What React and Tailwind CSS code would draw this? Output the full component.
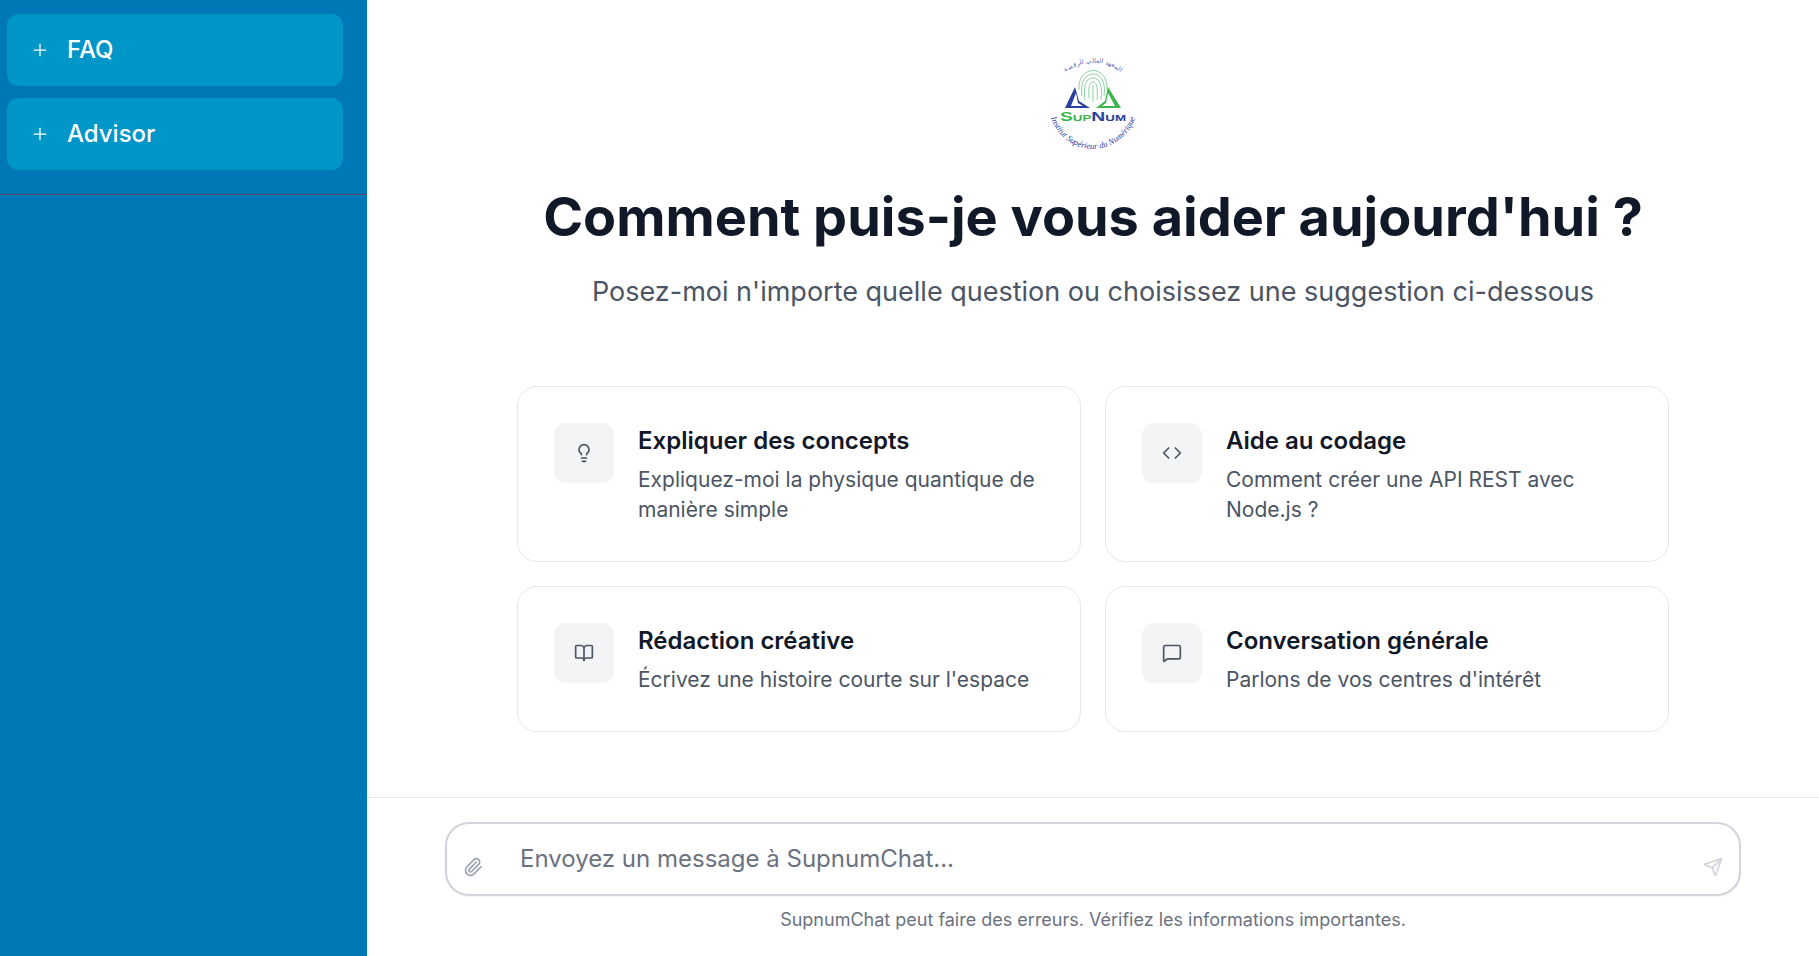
import { BookOpen, Code, Lightbulb, MessageSquare, Paperclip, Plus, Send } from "lucide-react";

const sideItems = ["FAQ", "Advisor"];

const suggestions = [
  { title: "Expliquer des concepts", text: "Expliquez-moi la physique quantique de manière simple", Icon: Lightbulb },
  { title: "Aide au codage", text: "Comment créer une API REST avec Node.js ?", Icon: Code },
  { title: "Rédaction créative", text: "Écrivez une histoire courte sur l'espace", Icon: BookOpen },
  { title: "Conversation générale", text: "Parlons de vos centres d'intérêt", Icon: MessageSquare },
];

// logo du SupNum, dessiné à la main
const Logo = () => (
  <svg viewBox="0 0 96 96" className="w-24 h-24">
    <defs>
      <path id="bas" d="M3 43 A45 48 0 0 0 93 43" fill="none" />
      <path id="haut" d="M6 36 A43 40 0 0 1 90 36" fill="none" />
    </defs>
    <text fontSize="8.6" fill="#2f3fa6" fontFamily="Liberation Serif, serif" fontStyle="italic">
      <textPath href="#bas" startOffset="50%" textAnchor="middle">Institut Supérieur du Numérique</textPath>
    </text>
    <text fontSize="6.5" fill="#5a6cc0" fontFamily="Noto Sans, sans-serif">
      <textPath href="#haut" startOffset="50%" textAnchor="middle">المعهد العالي للرقمنة</textPath>
    </text>
    <g fill="none" stroke="#8ed3a0" strokeWidth="1">
      <path d="M44 40 C43 28 45 24 48 24 C52 24 53 30 52 42" />
      <path d="M40 42 C38 26 42 20 48 20 C54 20 58 26 56 42" />
      <path d="M37 38 C35 24 40 16 48 16 C56 16 61 24 59 38" />
      <path d="M34 32 C33 20 40 12.500 48 12.500 C56 12.500 63 20 62 32" />
      <path d="M48 27 L48 44" />
    </g>
    <path d="M20 50 L30 29 L34 43 L45 50 Z" fill="#2b3f9e" />
    <path d="M26 48 L31 35 L33 45 L38 48 Z" fill="#fff" />
    <path d="M76 50 L63 29 L60 43 L51 50 Z" fill="#3db54a" />
    <path d="M70 48 L63 35 L61 45 L57 48 Z" fill="#fff" />
    <text x="15" y="63" textLength="66" lengthAdjust="spacingAndGlyphs" fontFamily="Liberation Sans, sans-serif" fontWeight="700" fontSize="13">
      <tspan fill="#3db54a">S</tspan>
      <tspan fill="#3db54a" fontSize="9">UP</tspan>
      <tspan fill="#2b3f9e">N</tspan>
      <tspan fill="#2b3f9e" fontSize="9">UM</tspan>
    </text>
  </svg>
);

const App = () => {
  return (
    <div className="flex h-screen overflow-hidden bg-white font-['Inter',sans-serif]">
      <aside className="w-[367px] shrink-0 bg-[#0077b6]">
        <div className="flex flex-col gap-3 pt-[14px] px-[7px] pb-6 border-b border-[#4a4a55]">
          {sideItems.map((name) => (
            <div key={name} className="flex items-center gap-[17px] w-[336px] h-[72px] px-[23px] rounded-xl bg-[#0096c7] text-white text-2xl font-medium">
              <Plus size={20} strokeWidth={1.5} />
              <span>{name}</span>
            </div>
          ))}
        </div>
      </aside>

      <main className="flex-1 flex flex-col min-w-0">
        <div className="flex-1 flex flex-col items-center pt-[58px]">
          <Logo />
          <h1 className="mt-7 text-[54px] leading-[70px] font-bold text-[#111827]">Comment puis-je vous aider aujourd'hui ?</h1>
          <p className="mt-5 text-[27px] leading-10 text-[#4b5563]">Posez-moi n'importe quelle question ou choisissez une suggestion ci-dessous</p>

          <div className="grid grid-cols-2 gap-6 w-[1152px] mt-[74px]">
            {suggestions.map(({ title, text, Icon }) => (
              <div key={title} className="flex gap-6 p-9 rounded-[20px] border border-[#e5e7eb] bg-white">
                <div className="flex items-center justify-center w-[60px] h-[60px] shrink-0 rounded-xl bg-[#f3f4f6] text-[#4b5563]">
                  <Icon size={20} />
                </div>
                <div>
                  <div className="text-2xl leading-9 font-semibold text-[#111827]">{title}</div>
                  <div className="mt-1.5 text-[21px] leading-[30px] text-[#4b5563]">{text}</div>
                </div>
              </div>
            ))}
          </div>
        </div>

        <div className="border-t border-[#e5e7eb] h-[159px] flex flex-col items-center pt-6">
          <div className="relative w-[1296px] h-[74px] rounded-3xl border-2 border-[#d1d5db] shadow-xs bg-white">
            <Paperclip size={20} className="absolute left-4 top-[33px] text-[#9ca3af]" />
            <div className="pl-[73px] pt-[17px] text-2xl leading-[35px] text-[#6b7280]">Envoyez un message à SupnumChat...</div>
            <Send size={20} className="absolute right-4 top-[33px] text-[#d1d5db]" />
          </div>
          <p className="mt-3 text-lg leading-6 text-[#6b7280]">SupnumChat peut faire des erreurs. Vérifiez les informations importantes.</p>
        </div>
      </main>
    </div>
  );
};

export default App;
